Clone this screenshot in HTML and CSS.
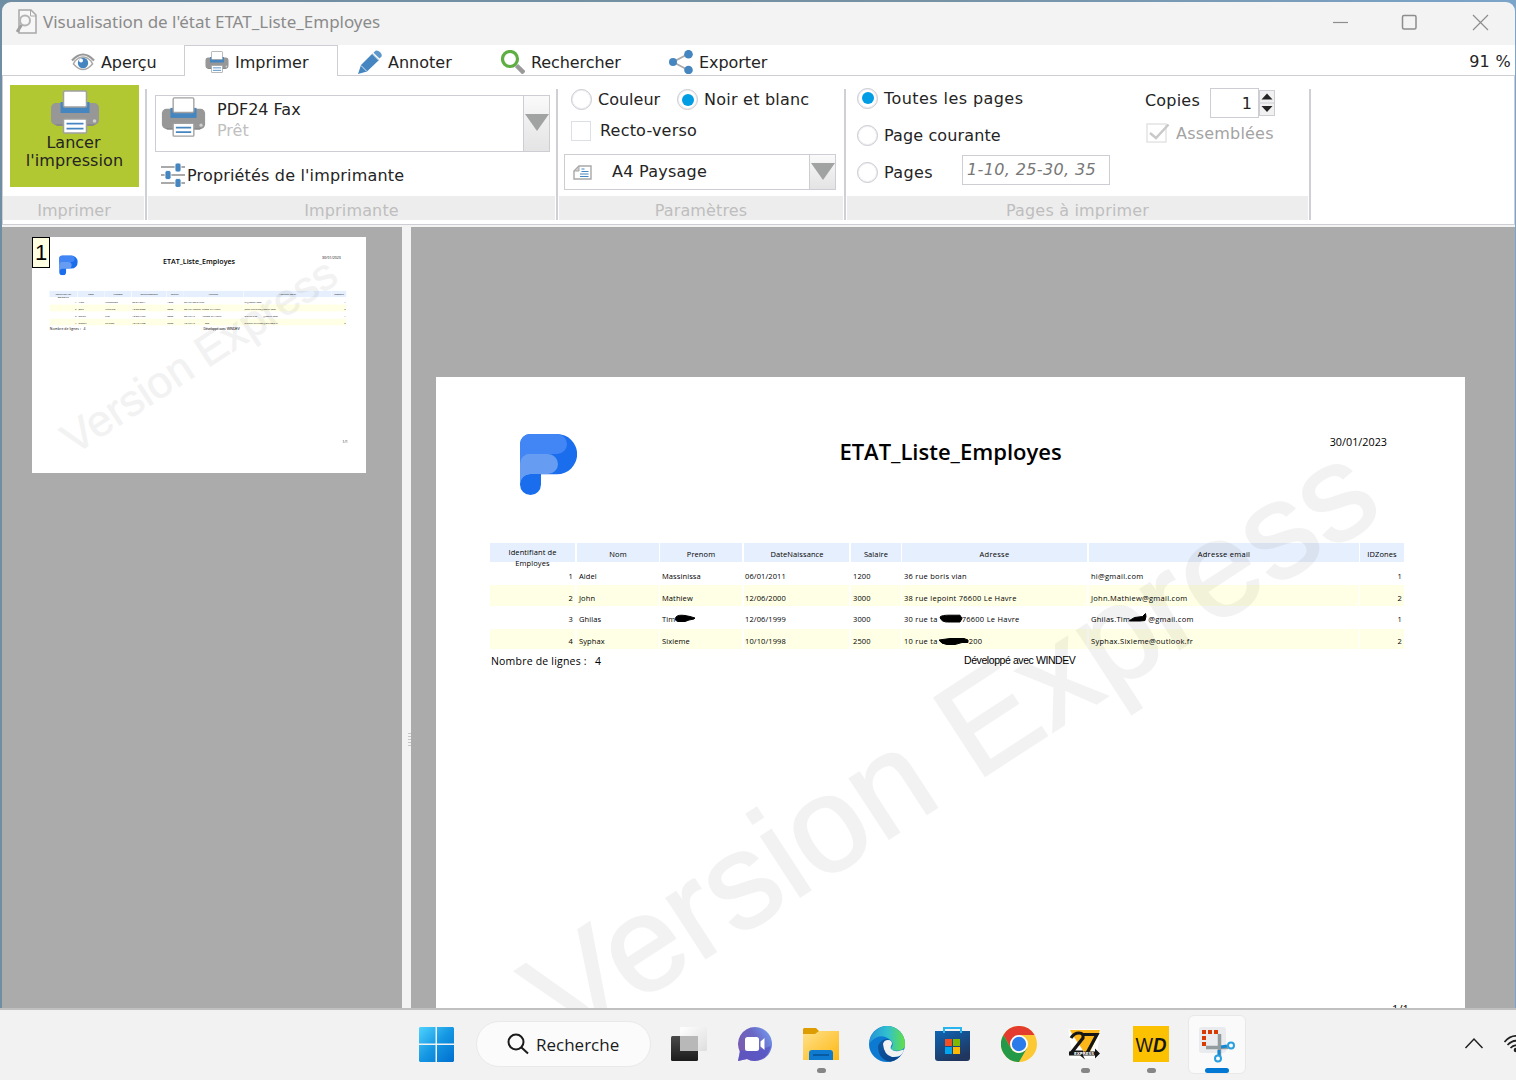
FILE: index.html
```html
<!DOCTYPE html>
<html lang="fr">
<head>
<meta charset="utf-8">
<title>Visualisation de l'état ETAT_Liste_Employes</title>
<link rel="stylesheet" href="styles.css">
</head>
<body>
<svg width="0" height="0" class="defs" aria-hidden="true">
  <defs>
    <symbol id="printer" viewBox="0 0 50 44">
      <rect x="1" y="13" width="48" height="22" rx="5" fill="#979797"/>
      <path d="M4 34h42l-3 2H7z" fill="#8a8a8a"/>
      <rect x="10.500" y="12" width="29" height="11" fill="#4686c0"/>
      <rect x="13.500" y="1" width="23" height="16" rx="1.500" fill="#fff" stroke="#a0a0a0" stroke-width="1.500"/>
      <rect x="13.500" y="29" width="23" height="14" rx="1" fill="#fff" stroke="#a0a0a0" stroke-width="1.500"/>
      <path d="M16.500 33.700h17M16.500 38.700h17" stroke="#4686c0" stroke-width="1.800"/>
      <circle cx="44.500" cy="31" r="1.800" fill="#d0d0d0"/>
    </symbol>
    <symbol id="logo" viewBox="0 0 58 62">
      <path d="M11 1H38A20 20 0 0 1 38 41.300H22V51.500A10.500 10.500 0 0 1 1 51.500V11A10 10 0 0 1 11 1Z" fill="#1a6eee"/>
      <path d="M11 1H38A10 10 0 0 1 38 21H1V11A10 10 0 0 1 11 1Z" fill="#4285f4"/>
      <path d="M1 21H22V41H11Q2 42 1 51Z" fill="#669df2"/>
      <path d="M11 21H29A10 10 0 0 1 29 41H11Q2 42 1 51V31A10 10 0 0 1 11 21Z" fill="#669df2"/>
      <path d="M1 20.500H11Q2 21.500 1 31Z" fill="#4285f4"/>
    </symbol>
  </defs>
</svg>

<div class="window">
  <header class="titlebar">
    <svg class="title-icon" width="22" height="26" viewBox="0 0 22 26" fill="none"><path d="M3 1h12l5 5v18H3z" fill="#f7f7f7" stroke="#a8a8a8" stroke-width="1.500"/><path d="M14.500 1v6H20" stroke="#a8a8a8"/><circle cx="9" cy="11.500" r="5" stroke="#b4b4b4" stroke-width="2"/><path d="M5.500 16 1 23" stroke="#a0a0a0" stroke-width="3"/></svg>
    <span class="title">Visualisation de l'état ETAT_Liste_Employes</span>
    <svg class="controls" width="160" height="20" viewBox="0 0 160 20" fill="none" stroke="#8d8d8d" stroke-width="1.200"><path d="M3 10.500h15"/><rect x="72.500" y="3.500" width="13.500" height="13.500" rx="1.500" stroke-width="1.500"/><path d="M143 3l15 15M158 3l-15 15"/></svg>
  </header>

  <nav class="tabs">
    <div class="tab t-apercu">
      <svg width="24" height="20" viewBox="0 0 24 20" fill="none"><path d="M1 8.500Q12-3.500 23 8.500" stroke="#989898" stroke-width="2.200"/><path d="M4 9Q12 1 20 9L21.500 12Q12 23 2.500 12Z" fill="#fff" stroke="#aaa" stroke-width="1.600"/><circle cx="12" cy="11" r="5.200" fill="#4686c0"/><circle cx="10" cy="8.500" r="2" fill="#fff"/></svg>
      <span>Aperçu</span>
    </div>
    <div class="tab active t-imprimer">
      <svg width="24" height="22" viewBox="0 0 50 44" preserveAspectRatio="none"><use href="#printer" width="50" height="44"/></svg>
      <span>Imprimer</span>
    </div>
    <div class="tab t-annoter">
      <svg width="24" height="24" viewBox="0 0 24 24"><path d="M0 24 3 15 14.500 3.500 21 10 9 21.500Z" fill="#4686c0"/><path d="M3 15.500 8.500 21M14.500 4l6 6" stroke="#fff" stroke-width=".8"/><path d="M15.500 2.700l2-2q2-1 4.500 1.300t1.500 4.500l-2 2z" fill="#5e97ca"/></svg>
      <span>Annoter</span>
    </div>
    <div class="tab t-rechercher">
      <svg width="24" height="24" viewBox="0 0 24 24" fill="none"><path d="M15.500 15.500 23 23" stroke="#999" stroke-width="4.500"/><circle cx="9" cy="9" r="7.500" stroke="#5fae44" stroke-width="3.200"/></svg>
      <span>Rechercher</span>
    </div>
    <div class="tab t-exporter">
      <svg width="24" height="24" viewBox="0 0 24 24"><path d="M19 4 4 12l15 8" fill="none" stroke="#aaa" stroke-width="1.800"/><g fill="#4686c0"><circle cx="4" cy="12" r="4"/><circle cx="19.500" cy="4.200" r="4.300"/><circle cx="19.500" cy="20" r="4.300"/></g></svg>
      <span>Exporter</span>
    </div>
    <span class="zoom">91 %</span>
  </nav>

  <section class="ribbon">
    <div class="group g1">
      <div class="body">
        <button class="launch">
          <svg width="50" height="44"><use href="#printer" width="50" height="44"/></svg>
          <span class="w-lancer">Lancer</span>
          <span class="w-impression">l'impression</span>
        </button>
      </div>
      <div class="label"><span>Imprimer</span></div>
    </div>
    <div class="group g2">
      <div class="body">
        <div class="combo printer-combo">
          <svg class="combo-icon" width="45" height="40" viewBox="0 0 50 44" preserveAspectRatio="none"><use href="#printer" width="50" height="44"/></svg>
          <div class="printer-text"><span class="w-pdf">PDF24 Fax</span><span class="muted">Prêt</span></div>
          <div class="arrow"><i></i></div>
        </div>
        <div class="props">
          <svg width="24" height="24" viewBox="0 0 24 24"><path d="M0 4h24M0 12h24M0 20h24" stroke="#a9a9a9" stroke-width="2"/><g fill="#4686c0" stroke="#fff" stroke-width=".8"><rect x="14" y="0" width="6" height="9" rx="2"/><rect x="4" y="7.500" width="6" height="9" rx="2"/><rect x="14" y="15.500" width="6" height="9" rx="2"/></g></svg>
          <span>Propriétés de l'imprimante</span>
        </div>
      </div>
      <div class="label"><span>Imprimante</span></div>
    </div>
    <div class="group g3">
      <div class="body">
        <div class="row colors"><i class="radio"></i><span>Couleur</span><i class="radio on"></i><span class="w-noir">Noir et blanc</span></div>
        <div class="row duplex"><i class="check"></i><span>Recto-verso</span></div>
        <div class="combo paper-combo">
          <svg width="19" height="15" viewBox="0 0 19 15" fill="none"><path d="M6 1h12v13H1V6z" fill="#fff" stroke="#a8a8a8" stroke-width="1.400"/><path d="M6 1v5H1z" fill="#ccc" stroke="#a8a8a8"/><path d="M8.500 4h3M8.500 6.500h7M7 9h8.500M7 11.500h8.500" stroke="#4686c0" stroke-width="1.200"/></svg>
          <span>A4 Paysage</span>
          <div class="arrow"><i></i></div>
        </div>
      </div>
      <div class="label"><span>Paramètres</span></div>
    </div>
    <div class="group g4">
      <div class="body">
        <div class="ranges">
          <div class="row"><i class="radio on"></i><span class="w-toutes">Toutes les pages</span></div>
          <div class="row"><i class="radio"></i><span class="w-courante">Page courante</span></div>
          <div class="row"><i class="radio"></i><span class="w-pages">Pages</span><div class="range-input"><em>1-10, 25-30, 35</em></div></div>
        </div>
        <div class="copies">
          <div class="copy-row"><span class="w-copies">Copies</span><div class="num">1</div>
            <svg class="spin" width="16" height="26" viewBox="0 0 16 26"><rect x=".5" y=".5" width="15" height="25" fill="#f1f1f1" stroke="#cdcdd3"/><path d="M1 13h14" stroke="#cdcdd3"/><path d="M2.500 9.500h11L8 3.500zM2.500 16h11L8 22z" fill="#242424"/></svg>
          </div>
          <div class="collate"><svg width="24" height="22" viewBox="0 0 24 22" fill="none"><rect x="1" y="2" width="19" height="18" stroke="#e4e4e4" stroke-width="1.500"/><path d="M4 11l6 5L22.500 2.500" stroke="#c9c9c9" stroke-width="2.500"/></svg><span>Assemblées</span></div>
        </div>
      </div>
      <div class="label"><span class="w-g4">Pages à imprimer</span></div>
    </div>
  </section>

  <main class="workspace">
    <aside class="thumbs">
      <div class="thumb">
        <article class="sheet mini">
          <div class="sheet-head"><svg width="58" height="62"><use href="#logo" width="58" height="62"/></svg><h1>ETAT_Liste_Employes</h1><time>30/01/2023</time></div>
          <div class="grid head"><div class="two">Identifiant de Employes</div><div>Nom</div><div>Prenom</div><div>DateNaissance</div><div>Salaire</div><div>Adresse</div><div>Adresse email</div><div>IDZones</div></div>
          <div class="grid r1"><div>1</div><div>Aidel</div><div>Massinissa</div><div>06/01/2011</div><div>1200</div><div>36 rue boris vian</div><div>hi@gmail.com</div><div>1</div></div>
          <div class="grid r2"><div>2</div><div>John</div><div>Mathiew</div><div>12/06/2000</div><div>3000</div><div>38 rue lepoint 76600 Le Havre</div><div>John.Mathiew@gmail.com</div><div>2</div></div>
          <div class="grid r3"><div>3</div><div>Ghilas</div><div>Tim</div><div>12/06/1999</div><div>3000</div><div>30 rue ta<b class="gap-a"></b>76600 Le Havre</div><div>Ghilas.Tim<b class="gap-b"></b>@gmail.com</div><div>1</div></div>
          <div class="grid r4"><div>4</div><div>Syphax</div><div>Sixieme</div><div>10/10/1998</div><div>2500</div><div>10 rue ta<b class="gap-c"></b>200</div><div>Syphax.Sixieme@outlook.fr</div><div>2</div></div>
          <div class="sheet-foot"><span class="count">Nombre de lignes :</span><span class="count-n">4</span><span class="made">Développé avec WINDEV</span></div>
          <div class="pageno">1/1</div>
          <svg class="mark" width="1029" height="727"><text transform="translate(540 405) rotate(-33.100)" text-anchor="middle">Version Express</text></svg>
        </article>
        <span class="thumb-no">1</span>
      </div>
    </aside>
    <div class="splitter"><i></i><i></i><i></i><i></i><i></i></div>
    <div class="canvas">
      <article class="sheet">
        <div class="sheet-head"><svg width="58" height="62"><use href="#logo" width="58" height="62"/></svg><h1>ETAT_Liste_Employes</h1><time>30/01/2023</time></div>
        <div class="grid head"><div class="two">Identifiant de Employes</div><div>Nom</div><div>Prenom</div><div>DateNaissance</div><div>Salaire</div><div>Adresse</div><div>Adresse email</div><div>IDZones</div></div>
        <div class="grid r1"><div>1</div><div>Aidel</div><div>Massinissa</div><div>06/01/2011</div><div>1200</div><div>36 rue boris vian</div><div>hi@gmail.com</div><div>1</div></div>
        <div class="grid r2"><div>2</div><div>John</div><div>Mathiew</div><div>12/06/2000</div><div>3000</div><div>38 rue lepoint 76600 Le Havre</div><div>John.Mathiew@gmail.com</div><div>2</div></div>
        <div class="grid r3"><div>3</div><div>Ghilas</div><div>Tim</div><div>12/06/1999</div><div>3000</div><div>30 rue ta<b class="gap-a"></b>76600 Le Havre</div><div>Ghilas.Tim<b class="gap-b"></b>@gmail.com</div><div>1</div></div>
        <div class="grid r4"><div>4</div><div>Syphax</div><div>Sixieme</div><div>10/10/1998</div><div>2500</div><div>10 rue ta<b class="gap-c"></b>200</div><div>Syphax.Sixieme@outlook.fr</div><div>2</div></div>
        <div class="sheet-foot"><span class="count">Nombre de lignes :</span><span class="count-n">4</span><span class="made">Développé avec WINDEV</span></div>
        <div class="pageno">1/1</div>
        <svg class="mark" width="1029" height="727"><text transform="translate(540 405) rotate(-33.100)" text-anchor="middle">Version Express</text>
          <g class="ink"><path d="M240 240q2-2.500 9-1.500l5 1 5 1.500-1 1-5 1-4 1.500h-7q-4-1-2-4.500z"/><path d="M504 240q2-2 10-1.800h10l2 3.300-2 3.500h-11q-8 .5-9-5z"/><path d="M693.500 243.500l5-3 8-1 3-3 .5 3-1 4-5 .5h-10z"/><path d="M503 263l11-1.500h14l4 1.500v2.500l-6 0-7 2h-8q-6-.5-8-4.500z"/></g>
        </svg>
      </article>
    </div>
  </main>
</div>

<footer class="taskbar">
  <svg class="start" width="35" height="35" viewBox="0 0 35 35"><defs><linearGradient id="win" gradientUnits="userSpaceOnUse" x1="0" y1="0" x2="35" y2="35"><stop stop-color="#4fd3ff"/><stop offset=".5" stop-color="#1597e2"/><stop offset="1" stop-color="#006fcf"/></linearGradient></defs><path d="M1 0h15.500v16.500H0V1zM18 0h16l1 1v15.500H18zM0 18h16.500v17H1l-1-1zM18 18h17v16l-1 1H18z" fill="url(#win)"/></svg>
  <div class="search"><svg width="22" height="22" viewBox="0 0 22 22" fill="none" stroke="#1b1b1b" stroke-width="2"><circle cx="9" cy="9" r="7.500"/><path d="M14.500 14.500 21 20.500"/></svg><span>Recherche</span></div>
  <div class="apps">
    <div class="app"><svg width="38" height="38" viewBox="0 0 38 38"><defs><linearGradient id="tv" x2="0" y2="1"><stop stop-color="#4a4a4a"/><stop offset="1" stop-color="#1c1c1c"/></linearGradient><linearGradient id="tw" x2="1" y2="1"><stop stop-color="#fff"/><stop offset="1" stop-color="#dedede"/></linearGradient></defs><rect x="1" y="11" width="27" height="25" rx="1.500" fill="url(#tv)"/><rect x="10" y="2" width="27" height="24" rx="1.500" fill="url(#tw)"/><path d="M10 11h18v15H10z" fill="#b8b8b8"/></svg></div>
    <div class="app"><svg width="36" height="36" viewBox="0 0 36 36"><defs><linearGradient id="chat" x1="0" y1=".6" x2="1" y2="0"><stop stop-color="#7b5bb0"/><stop offset=".5" stop-color="#6967c4"/><stop offset="1" stop-color="#75a5f7"/></linearGradient></defs><path d="M18 1a17 17 0 1 1-8 32l-9 2 2-9A17 17 0 0 1 18 1z" fill="url(#chat)"/><path d="M3 24q14 3 31-4-4 14-16 15-5 0-8-2l-9 2z" fill="#5452c4" opacity=".7"/><rect x="8" y="11" width="14" height="14" rx="2.500" fill="#fff"/><path d="M23.500 15.500l4-3.500v12l-4-3.500z" fill="#fff"/></svg></div>
    <div class="app run"><svg width="36" height="34" viewBox="0 0 36 34"><defs><linearGradient id="fold" x2="1" y2="1"><stop stop-color="#ffe18a"/><stop offset="1" stop-color="#fdb813"/></linearGradient></defs><path d="M0 2l1-1h12l3 3h19l1 1v10H0z" fill="#dd9c00"/><path d="M0 7h12l4-3h20v29H0z" fill="url(#fold)"/><path d="M6 33V26q0-3 3-3h18q3 0 3 3v7z" fill="#0f7bd0"/><path d="M10 28h16" stroke="#074f93" stroke-width="1.500"/></svg></div>
    <div class="app"><svg width="36" height="36" viewBox="0 0 36 36"><defs><linearGradient id="e1" x2="1"><stop stop-color="#2493d7"/><stop offset=".5" stop-color="#31c0d0"/><stop offset="1" stop-color="#65e23c"/></linearGradient><linearGradient id="e2" x2="1" y2="1"><stop stop-color="#0c59a4"/><stop offset="1" stop-color="#0b4086"/></linearGradient><clipPath id="ec"><circle cx="18" cy="18" r="18"/></clipPath></defs><g clip-path="url(#ec)"><path d="M0 0h36v36H0z" fill="#0d7ad2"/><path d="M0 18Q1 7 9 3 18-4 27 1q10 4 10 15 0 7-6 8.500-6 1-8.500-1-1-1 1-4 1-4-4-7Q9 6 0 18z" fill="url(#e1)"/><path d="M9 20q3-8 11-7-6 4-4 11 4 8 12 7 4-1 6-4-4 8-12 9Q9 34 9 20z" fill="url(#e2)"/><path d="M14 18q1-4 5-4 4 0 4 4-2 3-1 5 4 4 11 1l6-1v14l-5-9.500q-4 4-11 3.500-8-2-9-13z" fill="#f2f2f2"/></g></svg></div>
    <div class="app"><svg class="store" width="36" height="36" viewBox="0 0 36 36"><defs><linearGradient id="store" x2=".5" y2="1"><stop stop-color="#0e65b4"/><stop offset="1" stop-color="#20365e"/></linearGradient></defs><path d="M1 5h35v27q0 3-3 3H4q-3 0-3-3z" fill="url(#store)"/><path d="M10 7V2h17v5" fill="none" stroke="#28b4ef" stroke-width="2"/><path d="M11 13h7v7h-7z" fill="#f25022"/><path d="M19 13h7v7h-7z" fill="#7fba00"/><path d="M11 21h7v7h-7z" fill="#00a4ef"/><path d="M19 21h7v7h-7z" fill="#ffb900"/></svg></div>
    <div class="app"><svg width="36" height="36" viewBox="0 0 36 36"><circle cx="18" cy="18" r="18" fill="#fcc934"/><path d="M2.400 9A18 18 0 0 1 33.600 9H18L10.200 22.500z" fill="#e33b2e"/><path d="M2.400 9 10.200 22.500Q13 27 18 27L25.800 22.500 18 36A18 18 0 0 1 2.400 9z" fill="#249a48"/><circle cx="18" cy="18" r="9" fill="#fff"/><circle cx="18" cy="18" r="7.200" fill="#2b7bea"/></svg></div>
    <div class="app run"><svg width="36" height="36" viewBox="0 0 36 36"><path d="M1.500 3h32l-3 21 3 4-4 4.500H2l3-8-3-14z" fill="#fff"/><path d="M3 4h30l-1 3-9 19h-6L5 8z" fill="#fcb61a"/><g fill="none" stroke="#161616" stroke-width="3.200"><path d="M4 12q3-5 8-5t4 5L5 26h11"/><path d="M16 8.500h14L20 27"/></g><path d="M2 25.500h26v-3l5 5-5 5v-3H16l2 4-5-4H2z" fill="#161616"/><text x="7" y="29" class="express">EXPRESS</text></svg></div>
    <div class="app run"><svg width="36" height="36" viewBox="0 0 36 36"><path d="M0 0h36v36H0z" fill="#fcc100"/><text x="2.500" y="25.500" class="wd" textLength="31" lengthAdjust="spacingAndGlyphs">W<tspan class="bold">D</tspan></text></svg></div>
    <div class="app selected"><svg width="38" height="38" viewBox="0 0 38 38" fill="none"><rect x="1" y="1" width="27" height="26" rx="3" fill="#e9ebee"/><path d="M4 6h4m2 0h4m2 0h4M6 10v4m0 2v4" stroke="#d83b01" stroke-width="4"/><path d="M21.500 8v22M8 21.500h22" stroke="#949b9f" stroke-width="3.500"/><path d="M23 21l6-1M21 24v6" stroke="#1588d1" stroke-width="3"/><circle cx="33" cy="19.500" r="3" stroke="#2a9fe0" stroke-width="2"/><circle cx="20" cy="32.500" r="3" stroke="#2a9fe0" stroke-width="2"/></svg></div>
  </div>
  <svg class="tray" width="52" height="22" viewBox="0 0 52 22" fill="none" stroke="#202020"><path d="M1.500 14 10 5 18.500 14" stroke-width="1.500"/><g stroke-width="1.700"><path d="M40.500 8Q50-3 62 6M43.500 11q8-8 15-1M46.500 14q5-5 9-.5"/></g><circle cx="52" cy="16" r="2.300" fill="#202020" stroke="none"/></svg>
</footer>
</body>
</html>
```

FILE: styles.css
```css
* { box-sizing: border-box; }
html, body { margin: 0; height: 1080px; overflow: hidden; }
body { width: 1516px; display: flex; flex-direction: column; background: linear-gradient(90deg, #6f8da3, #7691a3 60%, #7ba4c9); font: 16px/20px "DejaVu Sans", Verdana, sans-serif; color: #242424; white-space: nowrap; }
.defs { position: absolute; }
svg { display: block; flex: none; }
.window { height: 1008px; margin: 0 1px 0 2px; padding-top: 2px; display: flex; flex-direction: column; }
.titlebar { height: 43px; flex: none; display: flex; align-items: center; background: #f3f3f3; border-radius: 9px 9px 0 0; padding: 0 25px 3px 14px; }
.title { font: 17px/24px "Noto Sans", "Open Sans", sans-serif; color: #8b8b8b; margin-left: 5px; letter-spacing: -0.020px; }
.controls { margin-left: auto; }

.tabs { height: 31px; flex: none; display: flex; background: #fff; }
.tab { display: flex; align-items: center; gap: 6px; padding-top: 4px; border-bottom: 1px solid #cdcdd3; letter-spacing: -0.080px; }
.tab span { padding-top: 1px; }
.tab.active { border: 1px solid #cdcdd3; border-bottom: 0; padding-top: 2px; letter-spacing: 0; }
.t-apercu { width: 182px; padding-left: 69px; }
.t-imprimer { width: 154px; padding-left: 20px; }
.t-annoter { width: 163px; padding-left: 20px; letter-spacing: 0; }
.t-rechercher { width: 168px; }
.t-exporter { width: 200px; }
.zoom { flex: 1; text-align: right; padding: 7px 4px 0; border-bottom: 1px solid #cdcdd3; letter-spacing: 0.300px; }

.ribbon { height: 149px; flex: none; display: flex; background: #fff; border: solid #cdcdd3; border-width: 0 1px 1px; box-sizing: border-box; }
.group { height: 144px; display: flex; flex-direction: column; position: relative; padding-right: 3px; }
.group::after { content: ""; position: absolute; right: 0; top: 13px; bottom: 0; width: 2px; background: #cfcfd6; }
.body { height: 120px; }
.label { height: 24px; background: #ededed; color: #bebebe; text-align: center; line-height: 30px; }
.g1 { width: 144px; } .g2 { width: 411px; padding-left: 1px; } .g3 { width: 288px; padding-left: 1px; } .g4 { width: 465px; padding-left: 1px; }
.g1 .label { padding-left: 1px; }
.g2 .label { letter-spacing: 0.150px; }
.g3 .label { letter-spacing: 0.150px; }
.g1 .body { padding: 9px 0 0 7px; }
.launch { width: 129px; height: 102px; border: 0; padding: 5px 0 0; background: #b2c832; display: flex; flex-direction: column; align-items: center; font: 16px/18px "DejaVu Sans", Verdana, sans-serif; color: #242424; }
.w-lancer { padding-right: 2px; }
.w-impression { letter-spacing: 0.120px; }
.combo { display: flex; border: 1px solid #cdcdd3; background: #fff; }
.arrow { margin: -1px -1px -1px auto; width: 27px; border: 1px solid #cdcdd3; background: linear-gradient(#fafafa, #eee 50%, #e4e4e4); display: flex; justify-content: center; align-items: center; }
.arrow i { border: solid transparent; border-width: 17px 12px 0; border-top-color: #a0a3a2; margin-top: -2px; }
.g2 .body { padding: 19px 0 0 7px; }
.printer-combo { width: 395px; height: 57px; }
.combo-icon { margin: 1px 0 0 5px; }
.printer-text { display: flex; flex-direction: column; line-height: 21px; margin: 3px 0 0 11px; }
.muted { color: #c0c0c0; }
.props { display: flex; align-items: center; margin: 11px 0 0 6px; gap: 2px; letter-spacing: 0.170px; }
.props span { padding-top: 1px; }
.g3 .body { padding: 12px 0 0 5px; }
.row { display: flex; align-items: center; }
.row span { padding-top: 1px; }
.radio { flex: none; width: 21px; height: 21px; border: 1px solid #c8c8cf; box-shadow: inset 0 0 0 1px #f0f0f4; border-radius: 50%; background: #fff; display: inline-flex; align-items: center; justify-content: center; }
.radio.on::after { content: ""; width: 12px; height: 12px; border-radius: 50%; background: #009ce4; }
.colors { padding: 1px 0 0 7px; gap: 6px; }
.colors .on { margin-left: 11px; }
.w-noir { letter-spacing: 0.220px; }
.duplex { padding-left: 7px; gap: 9px; margin-top: 10px; letter-spacing: 0.200px; }
.check { width: 20px; height: 20px; border: 1.500px solid #dcdfe6; }
.paper-combo { width: 272px; height: 36px; margin-top: 13px; align-items: stretch; padding-left: 8px; letter-spacing: 0.250px; }
.paper-combo svg { margin-top: 10px; }
.paper-combo span { line-height: 33px; margin-left: 20px; }
.g4 .body { display: flex; padding: 11px 0 0 10px; }
.ranges { display: flex; flex-direction: column; gap: 15px; width: 288px; }
.ranges .row { height: 22px; gap: 6px; }
.ranges .radio + span { min-width: 49px; }
.w-toutes { letter-spacing: 0.430px; }
.w-courante { letter-spacing: 0.120px; }
.w-pages { letter-spacing: 0.400px; }
.w-g4 { letter-spacing: 0.180px; }
.range-input { width: 148px; height: 30px; margin: -4px 0 0 23px; border: 1.500px solid #cdcdd3; padding-left: 4px; line-height: 28px; color: #777; letter-spacing: 0.360px; }
.copies { padding-top: 1px; }
.copy-row { display: flex; }
.copy-row .w-copies { width: 65px; line-height: 25px; letter-spacing: 0.200px; }
.num { width: 49px; height: 30px; border: 1.500px solid #cdcdd3; text-align: right; padding-right: 6px; line-height: 29px; }
.spin { margin: 2px 0 0 0; }
.collate { display: flex; align-items: center; gap: 6px; margin: 4px 0 0 1px; color: #a3a3a3; letter-spacing: 0.200px; }
.collate span { padding-top: 2px; }

.workspace { flex: 1; min-height: 0; display: flex; border-top: 2px solid #f3f3f3; background: #ababab; }
.thumbs { width: 400px; padding: 10px 0 0 30px; }
.thumb { position: relative; width: 334px; height: 236px; background: #fff; overflow: hidden; }
.thumb-no { position: absolute; left: 0; top: 0; width: 18px; height: 31px; background: #ffffe1; border: 1px solid #000; font: 22px/29px "Liberation Sans", Arial, sans-serif; color: #000; text-align: center; }
.splitter { width: 9px; background: #f3f3f3; display: flex; flex-direction: column; gap: 2px; padding: 506px 0 0 6px; }
.splitter i { width: 3px; height: 1px; background: #c6c6c6; }
.canvas { flex: 1; overflow: hidden; padding: 150px 0 0 25px; }

.sheet { position: relative; width: 1029px; height: 727px; background: #fff; color: #000; font: 7.500px/10px "Open Sans", "Noto Sans", sans-serif; letter-spacing: 0.100px; padding: 56px 61px 0 54px; }
.mini { transform: scale(0.3246); transform-origin: 0 0; }
.sheet-head { height: 110px; display: grid; grid-template-columns: 320px 1fr 320px; }
.sheet-head svg { margin-left: 29px; }
.sheet-head h1 { margin: 2px 0 0 7px; font: 600 22px/32px "Open Sans", sans-serif; text-align: center; letter-spacing: 0; }
.sheet-head time { font-size: 10.800px; line-height: 18px; text-align: right; padding-right: 17px; letter-spacing: 0; }
.grid { display: grid; grid-template-columns: 87px 83px 84px 107px 51px 187px 271px 44px; grid-template-rows: 100%; }
.grid > div { padding-left: 2px; border-right: 2px solid #fff; overflow: visible; }
.grid > div:nth-child(2), .grid > div:nth-child(5), .grid > div:nth-child(7) { border-right-width: 1px; }
.grid > div:nth-child(4) { padding-left: 1px; }
.grid > div:nth-child(6), .grid > div:nth-child(7) { letter-spacing: 0.270px; }
.grid > div:last-child { border: 0; text-align: right; padding-right: 2px; }
.grid > div:first-child { text-align: right; padding-right: 2px; }
.head { height: 19px; }
.head > div, .head > div:first-child, .head > div:last-child { background: #e6effd; text-align: center; line-height: 22px; padding: 0; }
.head > .two { white-space: normal; line-height: 11px !important; padding: 4px 12px 0 !important; }
.r1 { height: 23px; line-height: 28px; }
.r2 { height: 21px; line-height: 26px; }
.r3 { height: 23px; line-height: 26px; }
.r4 { height: 20px; line-height: 24px; }
.r2 > div, .r4 > div { background: #ffffe5; }
.gap-a, .gap-b, .gap-c { display: inline-block; width: 24px; }
.gap-b { width: 18px; }
.gap-c { width: 31px; }
.sheet-foot { display: flex; font-size: 10.500px; line-height: 24px; padding-left: 1px; }
.count { width: 104px; letter-spacing: 0.200px; }
.count-n { width: 369px; }
.made { font: 10.500px/23px "Liberation Sans", Arial, sans-serif; letter-spacing: -0.420px; }
.pageno { position: absolute; right: 56px; top: 625px; font-size: 11px; line-height: 14px; }
.mark { position: absolute; left: 0; top: 0; font: 135.700px "Liberation Sans", Arial, sans-serif; letter-spacing: 0; }
.mark text { fill: #000; stroke: #000; stroke-width: 2px; opacity: 0.048; }
.ink { fill: #000; stroke: #000; stroke-width: 1; stroke-linejoin: round; }

.taskbar { height: 72px; flex: none; background: #f2f2f2; border-top: 2px solid #c0c0c0; display: flex; align-items: flex-start; }
.start { margin: 17px 0 0 419px; }
.search { width: 175px; height: 46px; margin: 11px 0 0 22px; border: 1.500px solid #e9e9e9; border-radius: 23px; background: #fbfbfb; display: flex; align-items: center; padding-left: 30px; gap: 7px; font: 17px/24px "Open Sans", "Noto Sans", sans-serif; color: #1b1b1b; }
.search svg { margin-top: -1px; }
.search span { padding-top: 2px; }
.apps { display: flex; margin-left: 5px; }
.app { position: relative; width: 66px; height: 68px; display: flex; justify-content: center; align-items: center; }
.store { margin-right: 2px; }
.run::after, .selected::after { content: ""; position: absolute; left: 29px; top: 58px; width: 9px; height: 5px; border-radius: 3px; background: #868686; }
.selected { width: 58px; height: 59px; margin: 5px 4px 0; border: 1.500px solid #e8e8e8; border-radius: 6px; background: #fafafa; }
.selected::after { left: 16px; top: 52px; width: 24px; background: #0078d4; }
.express { font: bold 4px "DejaVu Sans", sans-serif; fill: #fff; }
.wd { font: 21px "Liberation Sans", Arial, sans-serif; fill: #161616; }
.bold { font-weight: bold; font-style: italic; }
.tray { margin: 24px 0 0 auto; }
```
